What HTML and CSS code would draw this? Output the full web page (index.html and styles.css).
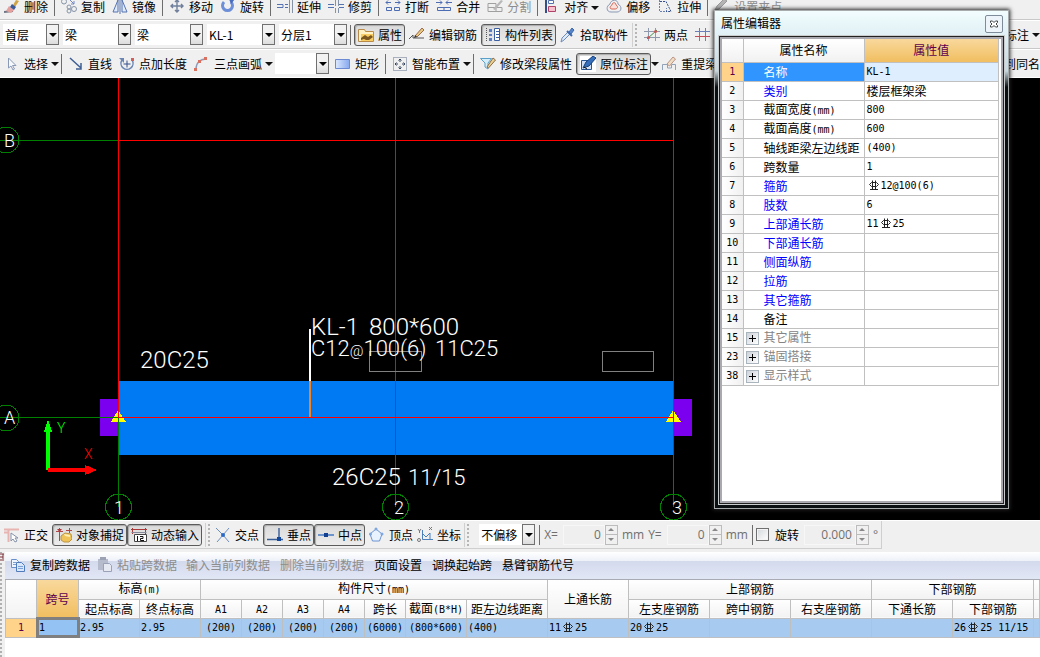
FILE: index.html
```html
<!DOCTYPE html>
<html lang="zh-CN">
<head>
<meta charset="utf-8">
<title>梁构件编辑</title>
<link rel="stylesheet" href="styles.css">
</head>
<body>
<svg class="defs" aria-hidden="true">
  <symbol id="brush" viewBox="0 0 16 16"><path d="M0 12l9-1" stroke="#6d7686" stroke-width="2"/><path d="M2 11l3-5 5 4-3 3z" fill="#e4a09c"/><path d="M9 5l3-5 3 1-4 6z" fill="#d0a545"/><path d="M6 7l4 3 2-3-4-3z" fill="#3d5a96"/></symbol>
  <symbol id="copyc" viewBox="0 0 16 16"><g fill="none" stroke="#8593a8"><circle cx="3" cy="1.500" r="2.500"/><circle cx="8" cy="7" r="2"/><circle cx="13" cy="9" r="2.500"/><circle cx="8" cy="11" r="2"/></g><path d="M9 0l4 4M13 1v3h-3" stroke="#7387c0" fill="none"/></symbol>
  <symbol id="mirror" viewBox="0 0 16 16"><path d="M6 0v12H1zM10 0v12h5z" fill="#dfeafd" stroke="#5572b0"/><path d="M8 0v14" stroke="#5572b0"/></symbol>
  <symbol id="move" viewBox="0 0 16 16"><path d="M8 0v12M2 6h12M6 2l2-2 2 2M6 10l2 2 2-2M4 4L2 6l2 2M12 4l2 2-2 2" fill="none" stroke="#6f7f9c" stroke-width="1.400"/></symbol>
  <symbol id="rotate" viewBox="0 0 16 16"><path d="M4 2a5 5 0 1 0 7 0" fill="none" stroke="#6d8ed8" stroke-width="3"/><path d="M9-1h6l-4 5z" fill="#4a6dc0"/></symbol>
  <symbol id="extend" viewBox="0 0 16 16"><path d="M0 4.500h6v3H0M8 4.500h3M8 7.500h3" fill="none" stroke="#5572b0"/><path d="M12.500 0v13M15.500 0v13" stroke="#8593a8"/></symbol>
  <symbol id="trim" viewBox="0 0 16 16"><path d="M0 4.500h6M0 7.500h6M11 4.500h5M11 7.500h5" stroke="#5572b0"/><path d="M7.500 0v13M10.500 0v13" stroke="#8593a8" stroke-dasharray="6 2"/></symbol>
  <symbol id="break" viewBox="0 0 16 16"><path d="M1 2.500h5M10 2.500h5M3 .500l-2 2 2 2M13 .500l2 2-2 2M1.500 7.500h5v3h-5zM9.500 7.500h5v3h-5z" fill="none" stroke="#4c6cb4"/></symbol>
  <symbol id="join" viewBox="0 0 16 16"><path d="M0 2.500h6M10 2.500h6M4 .500l2 2-2 2M12 .500l-2 2 2 2M1.500 7.500h13v3h-13zM8 7v4" fill="none" stroke="#4c6cb4"/></symbol>
  <symbol id="split" viewBox="0 0 16 16"><path d="M1 3.500h8v8H1zM1 7.500h14v4H5" fill="none" stroke="#a0a0a0"/><path d="M6 9l8-9 2 1-8 9z" fill="#b8b8b8"/></symbol>
  <symbol id="align" viewBox="0 0 16 16"><path d="M2 0v13" stroke="#34508c" stroke-width="2"/><path d="M4.500 .500h5v3h-5z" fill="#fff" stroke="#5572b0"/><path d="M4.500 6.500h7v5h-7z" fill="#f6c1cf" stroke="#b04468"/></symbol>
  <symbol id="offset" viewBox="0 0 16 16"><path d="M4 4c1-5 8-5 8 0 5 3 3 8-1 8H5C0 12 0 6 4 4z" fill="none" stroke="#8a99b4"/><path d="M6 5c0-3 4-3 4 0 3 2 1 4-1 4H6c-3 0-2-3 0-4z" fill="#fae0da" stroke="#d4685a"/></symbol>
  <symbol id="stretch" viewBox="0 0 16 16"><path d="M2.500 0v11.500h7V8" fill="none" stroke="#6a81b5" stroke-dasharray="2 1"/><path d="M3 1.500h6l5 10H9" fill="none" stroke="#34508c" stroke-dasharray="2 1"/></symbol>
  <symbol id="pencilg" viewBox="0 0 16 16"><path d="M1 10l2-4 7-7 3 2-8 8z" fill="#b4b4b4" stroke="#999"/></symbol>
  <symbol id="props" viewBox="0 0 16 16"><path d="M.500 2.500h6l1 2h8v10H.500z" fill="#fff3c6" stroke="#b98b4a"/><path d="M3 7h12v7H3z" fill="#f8cd63"/><path d="M3 11l4-3 3 2 3-2 2 2-4 3H8l-2-1-3 1z" fill="#7b581f"/></symbol>
  <symbol id="editbar" viewBox="0 0 16 16"><path d="M0 12l4-4v3h11" fill="none" stroke="#555"/><path d="M6 9l7-8 2 2-7 7z" fill="#e8c87b" stroke="#9c6a4f"/><path d="M5 11l1-3 2 2z" fill="#333"/></symbol>
  <symbol id="list" viewBox="0 0 16 16"><path d="M1.500 1v13" stroke="#555" stroke-dasharray="1 1"/><path d="M4 2h3v3H4zM4 7h3v2H4zM4 11h3v3H4z" fill="#5b7fc4"/><path d="M9.500 1.500h5v12h-5z" fill="#fff" stroke="#3c5fa4"/><path d="M11 4.500h3M11 7.500h3M11 10.500h3" stroke="#3c5fa4"/></symbol>
  <symbol id="picker" viewBox="0 0 16 16"><path d="M1 15l1-4 6-6 2 2-6 6z" fill="#dce9fb" stroke="#6f8cb8"/><path d="M7 4l5 5" stroke="#3f68ac" stroke-width="2"/><path d="M9 5l3-4 2 2-3 4z" fill="#5585cc" stroke="#3f68ac"/></symbol>
  <symbol id="twopt" viewBox="0 0 16 16"><path d="M4.500 1v13M11.500 1v13M0 4.500h16M0 10.500h16" stroke="#9099ab"/><path d="M3 12l10-9" stroke="#43944a"/><circle cx="4.500" cy="10.500" r="1.500" fill="#c55"/><circle cx="11.500" cy="4.500" r="1.500" fill="#c55"/></symbol>
  <symbol id="parallel" viewBox="0 0 16 16"><path d="M4.500 1v13M10.500 1v13" stroke="#6a7fb8"/><path d="M0 4.500h15" stroke="#6a7fb8"/><path d="M0 9.500h15" stroke="#c44d5c"/></symbol>
  <symbol id="cursor" viewBox="0 0 16 16"><path d="M4.500 2v10l2.500-2 2 4 1.500-1-2-3.500H12z" fill="#f6f8fc" stroke="#8a9ab6"/></symbol>
  <symbol id="line" viewBox="0 0 16 16"><path d="M2 2l11 10M13 7v6H8" fill="none" stroke="#3f5f94" stroke-width="1.500"/></symbol>
  <symbol id="ptlen" viewBox="0 0 16 16"><path d="M3 4a6 6 0 1 0 10 0" fill="none" stroke="#6c86b4" stroke-width="1.500"/><path d="M0 2h5v5z" fill="#6c86b4"/><path d="M8 4.500v7M4.500 8h7" stroke="#34508c"/><path d="M12 2h3v3h-3z" fill="#d2605a"/></symbol>
  <symbol id="arc" viewBox="0 0 16 16"><path d="M2 13C2 7 6 3 12 3" fill="none" stroke="#8f9ab8" stroke-width="1.300"/><path d="M0 12h3v3H0zM4 4h3v3H4zM10 1h3v3h-3z" fill="#d97060"/></symbol>
  <symbol id="rect" viewBox="0 0 16 16"><defs><linearGradient id="rg"><stop stop-color="#dce9ff"/><stop offset="1" stop-color="#86a8ee"/></linearGradient></defs><path d="M.500 3.500h14v9H.500z" fill="url(#rg)" stroke="#6c8bd2"/></symbol>
  <symbol id="smart" viewBox="0 0 16 16"><path d="M1.500 1.500h13v13h-13z" fill="none" stroke="#60718c" stroke-dasharray="1 1"/><path d="M8 3v3M8 10v3M3 8h3M10 8h3M6.500 4.500L8 3l1.500 1.500M6.500 11.500L8 13l1.500-1.500M4.500 6.500L3 8l1.500 1.500M11.500 6.500L13 8l-1.500 1.500" fill="none" stroke="#35455f"/></symbol>
  <symbol id="filter" viewBox="0 0 16 16"><path d="M.500 2.500h11L8 7v6l-3-2V7z" fill="#d4effa" stroke="#5aa0c8"/><path d="M7 11l6-9 2.500 2-7 8z" fill="#ecd28e" stroke="#8a6b4b"/></symbol>
  <symbol id="mark" viewBox="0 0 16 16"><path d="M0 0h16v16H0z" fill="#fff"/><path d="M1.500 4.500h10v9h-10z" fill="#cfe0f7" stroke="#2b5694"/><path d="M3 12l3-6 7-6 3 2-7 8z" fill="#356fba" stroke="#173d79"/><path d="M4 11l3 2" stroke="#111"/></symbol>
  <symbol id="relift" viewBox="0 0 16 16"><path d="M1.500 14V8.500h5V12h4V8.500h4V14" fill="none" stroke="#92a2b8"/><path d="M6 8l6-7 2.500 2-6 7z" fill="#f1ddc4" stroke="#bb9484"/></symbol>
  <symbol id="ortho" viewBox="0 0 16 16"><path d="M0 2.500h15M0 5.500h4M4.500 3v12" fill="none" stroke="#e8b4b0" stroke-width="2"/><path d="M7 6v8l2-2 2 3 2-1-2-3h3z" fill="#fff" stroke="#8592a8"/></symbol>
  <symbol id="snap" viewBox="0 0 16 16"><path d="M3.500 1v13M13.500 1v5M0 4.500h7M10 3.500h6" stroke="#ad4848"/><path d="M1 2l2.500 3L6 2z" fill="#ad3838"/><path d="M5 9l4-3 6 1 1 5-3 3H8L5 13z" fill="#efc357" stroke="#bc9444"/><path d="M8 7l6 1v2L9 9z" fill="#fff0b8"/></symbol>
  <symbol id="dyn" viewBox="0 0 16 16"><path d="M0 2.500h16M1.500 1v6M14.500 1v6" stroke="#ad3838"/><path d="M.500 5.500h15" stroke="#889"/><path d="M3.500 7.500h12v7h-12z" fill="#fff" stroke="#444"/><path d="M6.500 9v5M9 9.500h3v2H9.500v2H13" fill="none" stroke="#111"/></symbol>
  <symbol id="cross" viewBox="0 0 16 16"><path d="M1 1l7 7 6-7M2 15l6-7 6 7" fill="none" stroke="#6d8fc0"/><circle cx="8" cy="8" r="2" fill="#2b69c8"/></symbol>
  <symbol id="perp" viewBox="0 0 16 16"><path d="M12 1v11M0 12.500h16" stroke="#3a5e98" stroke-width="1.400"/><path d="M10 10h4v4h-4z" fill="#12499c"/></symbol>
  <symbol id="mid" viewBox="0 0 16 16"><path d="M0 8h16" stroke="#3a72c0" stroke-width="1.400"/><path d="M6 6h4v4H6z" fill="#123f90"/></symbol>
  <symbol id="penta" viewBox="0 0 16 16"><path d="M7 2l6 5-2.500 7h-7L1 7z" fill="#e9f2ff" stroke="#6c94cf"/><circle cx="7" cy="2" r="1.500" fill="#7ea6df"/><circle cx="13" cy="7" r="1.500" fill="#7ea6df"/><circle cx="1.500" cy="7" r="1.500" fill="#7ea6df"/></symbol>
  <symbol id="coord" viewBox="0 0 16 16"><path d="M5.500 3v9.500H16M5 6l4 4 4-4v6" fill="none" stroke="#4b80bf"/><path d="M1 2l1.500 2L4 2M2.500 4v2M12 0l3 3M15 0l-3 3" stroke="#777" fill="none"/><circle cx="2" cy="13" r="1.500" fill="none" stroke="#777"/></symbol>
  <symbol id="copy" viewBox="0 0 16 16"><path d="M1.500 2.500h5l2 2v6h-7z" fill="#eef5ff" stroke="#6a90cb"/><path d="M6.500 5.500h5l3 3v6h-8z" fill="#d8e7fc" stroke="#507bbd"/><path d="M8 9.500h5M8 11.500h5M3 5.500h3M3 7.500h3" stroke="#7da1d6"/></symbol>
  <symbol id="paste" viewBox="0 0 16 16"><path d="M1 2h10v11H1z" fill="#b6bccb"/><path d="M3 0h6v3H3z" fill="#9aa2b4"/><path d="M6.500 6.500h6l2 2v6h-8z" fill="#e6e9f2" stroke="#99a2b7"/></symbol>
  <symbol id="rebar" viewBox="0 0 12 10"><path d="M3.500 2.500h5l2 2-2 2h-5l-2-2zM4.500 .500v9M7.500 .500v9M2 9.500h8" fill="none" stroke="#222"/></symbol>
</svg>

<div class="app">
  <header class="toolbars">
    <div class="bar bar-edit">
      <button class="tool"><svg><use href="#brush"/></svg>删除</button><i class="sep"></i>
      <button class="tool"><svg><use href="#copyc"/></svg>复制</button>
      <button class="tool"><svg><use href="#mirror"/></svg>镜像</button><i class="sep"></i>
      <button class="tool"><svg><use href="#move"/></svg>移动</button>
      <button class="tool"><svg><use href="#rotate"/></svg>旋转</button><i class="sep"></i>
      <button class="tool"><svg><use href="#extend"/></svg>延伸</button>
      <button class="tool"><svg><use href="#trim"/></svg>修剪</button><i class="sep"></i>
      <button class="tool"><svg><use href="#break"/></svg>打断</button>
      <button class="tool"><svg><use href="#join"/></svg>合并</button>
      <button class="tool" disabled><svg><use href="#split"/></svg>分割</button><i class="sep"></i>
      <button class="tool drop"><svg><use href="#align"/></svg>对齐</button>
      <button class="tool"><svg><use href="#offset"/></svg>偏移</button>
      <button class="tool"><svg><use href="#stretch"/></svg>拉伸</button><i class="sep"></i>
      <button class="tool" disabled><svg><use href="#pencilg"/></svg>设置夹点</button>
    </div>
    <div class="bar bar-member">
      <span class="combo narrow"><select aria-label="楼层"><option>首层</option></select><i></i></span>
      <span class="combo"><select aria-label="构件类别"><option>梁</option></select><i></i></span>
      <span class="combo"><select aria-label="构件类型"><option>梁</option></select><i></i></span>
      <span class="combo"><select aria-label="构件名称"><option>KL-1</option></select><i></i></span>
      <span class="combo"><select aria-label="分层"><option>分层1</option></select><i></i></span>
      <i class="sep"></i>
      <button class="tool pressed"><svg><use href="#props"/></svg>属性</button>
      <button class="tool"><svg><use href="#editbar"/></svg>编辑钢筋</button>
      <button class="tool pressed"><svg><use href="#list"/></svg>构件列表</button>
      <button class="tool"><svg><use href="#picker"/></svg>拾取构件</button>
      <i class="grip"></i>
      <button class="tool"><svg><use href="#twopt"/></svg>两点</button>
      <button class="tool" aria-label="平行"><svg><use href="#parallel"/></svg></button>
      <button class="tool drop last">标注</button>
    </div>
    <div class="bar bar-draw">
      <button class="tool drop"><svg><use href="#cursor"/></svg>选择</button><i class="sep"></i>
      <button class="tool"><svg><use href="#line"/></svg>直线</button>
      <button class="tool"><svg><use href="#ptlen"/></svg>点加长度</button>
      <button class="tool drop"><svg><use href="#arc"/></svg>三点画弧</button>
      <span class="combo small"><select aria-label="画弧方式"><option></option></select><i></i></span>
      <button class="tool"><svg><use href="#rect"/></svg>矩形</button><i class="sep"></i>
      <button class="tool drop"><svg><use href="#smart"/></svg>智能布置</button><i class="sep"></i>
      <button class="tool"><svg><use href="#filter"/></svg>修改梁段属性</button>
      <span class="splitbtn"><button class="tool pressed"><svg><use href="#mark"/></svg>原位标注</button><i class="caret"></i></span>
      <button class="tool"><svg><use href="#relift"/></svg>重提梁</button>
      <button class="tool last">到同名</button>
    </div>
  </header>

  <main class="scene">
    <svg class="drawing" role="img" aria-label="梁平面图">
      <g shape-rendering="crispEdges">
        <path d="M118 303h556v74H118z" fill="#007af3"/>
        <path d="M100 321h18v37h-18zM674 321h18v37h-18z" fill="#7a00ef"/>
        <path d="M118 332l8 12h-15zM673 332l8 12h-15z" fill="#ff0"/>
        <g fill="none" stroke="#008000">
          <path d="M0 62.500h118M0 339.500h118M118.500 339v90M395.500 339v90M673.500 339v90"/>
          <circle cx="6" cy="62" r="13"/><circle cx="6" cy="340" r="13"/>
          <circle cx="118.500" cy="429" r="13"/><circle cx="395.500" cy="429" r="13"/><circle cx="673.500" cy="429" r="13"/>
        </g>
        <path d="M118 62.500h556M118.500 0v339M395.500 0v339M673.500 0v339M118 339.500h556" fill="none" stroke="#f00"/>
        <path d="M369.500 273.500h52v20h-52zM602.500 273.500h51v20h-51z" fill="none" stroke="#808080"/>
        <path d="M310 251v52" stroke="#fff" stroke-width="2"/><path d="M310 303v36" stroke="#f58220" stroke-width="2"/>
        <path d="M46 392v-38h-2l4-13 4 13h-2v38z" fill="#0f0"/>
        <path d="M48 390h37v-3l12 5-12 5v-3H48z" fill="#f00"/>
      </g>
      <g class="cad">
        <text x="140" y="290">20C25</text>
        <text x="311" y="257">KL-1</text><text x="369" y="257">800*600</text>
        <text class="stirrup" x="311" y="278">C12<tspan class="at">@</tspan>100(6)</text><text class="stirrup" x="435" y="278">11C25</text>
        <text x="332" y="407">26C25</text><text class="stirrup" x="408" y="407">11/15</text>
      </g>
      <g class="cad axis">
        <text x="4" y="69">B</text><text x="4" y="346">A</text>
        <text x="114" y="436">1</text><text x="394" y="436">2</text><text x="672" y="436">3</text>
        <text class="ax-y" x="57" y="355">Y</text><text class="ax-x" x="84" y="381">X</text>
      </g>
    </svg>
  </main>

  <div class="snapbar">
    <div class="bar bar-snap">
      <button class="tool"><svg><use href="#ortho"/></svg>正交</button>
      <span class="group"><button class="tool pressed"><svg><use href="#snap"/></svg>对象捕捉</button><button class="tool pressed"><svg><use href="#dyn"/></svg>动态输入</button></span>
      <i class="grip"></i>
      <button class="tool"><svg><use href="#cross"/></svg>交点</button>
      <span class="group"><button class="tool pressed"><svg><use href="#perp"/></svg>垂点</button><button class="tool pressed"><svg><use href="#mid"/></svg>中点</button></span>
      <button class="tool"><svg><use href="#penta"/></svg>顶点</button>
      <button class="tool"><svg><use href="#coord"/></svg>坐标</button>
      <i class="grip"></i>
      <span class="combo offset"><select aria-label="偏移方式"><option>不偏移</option></select><i></i></span>
      <i class="sep"></i>
      <span class="field"><label for="dx">X=</label><input id="dx" value="0" disabled><span class="spin"><i></i><i></i></span><span>mm</span></span>
      <span class="field"><label for="dy">Y=</label><input id="dy" value="0" disabled><span class="spin"><i></i><i></i></span><span>mm</span></span>
      <i class="sep"></i>
      <span class="field rot"><input id="rot" type="checkbox"><label for="rot">旋转</label><input class="angle" aria-label="旋转角度" value="0.000" disabled><span class="spin"><i></i><i></i></span><span>°</span></span>
    </div>
  </div>

  <section class="panel">
    <div class="gutter"><svg viewBox="0 0 5 8"><path d="M0 1h4M0 4h3M0 7h4M3 1v5" stroke="#7a3038" fill="none"/></svg></div>
    <div class="panelbody">
    <nav class="paneltools">
      <button class="tool"><svg><use href="#copy"/></svg>复制跨数据</button>
      <button class="tool" disabled><svg><use href="#paste"/></svg>粘贴跨数据</button>
      <button class="tool" disabled>输入当前列数据</button>
      <button class="tool" disabled>删除当前列数据</button>
      <button class="tool">页面设置</button>
      <button class="tool">调换起始跨</button>
      <button class="tool">悬臂钢筋代号</button>
    </nav>
    <table class="spans">
      <colgroup><col class="c-no"><col class="c-span"><col class="c-md"><col class="c-md"><col class="c-sm"><col class="c-sm"><col class="c-sm"><col class="c-sm"><col class="c-sm"><col class="c-md"><col class="c-lg"><col class="c-lg"><col class="c-lg"><col class="c-lg"><col class="c-lg"><col class="c-lg"><col class="c-lg"><col></colgroup>
      <thead>
        <tr><th rowspan="2"></th><th rowspan="2" class="hot">跨号</th><th colspan="2">标高<b>(m)</b></th><th colspan="7">构件尺寸<b>(mm)</b></th><th rowspan="2">上通长筋</th><th colspan="3">上部钢筋</th><th colspan="2">下部钢筋</th><th></th></tr>
        <tr><th>起点标高</th><th>终点标高</th><th><b>A1</b></th><th><b>A2</b></th><th><b>A3</b></th><th><b>A4</b></th><th>跨长</th><th>截面<b>(B*H)</b></th><th>距左边线距离</th><th>左支座钢筋</th><th>跨中钢筋</th><th>右支座钢筋</th><th>下通长筋</th><th>下部钢筋</th><th></th></tr>
      </thead>
      <tbody>
        <tr><th class="no">1</th><td class="active">1</td><td>2.95</td><td>2.95</td><td class="mid">(200)</td><td class="mid">(200)</td><td class="mid">(200)</td><td class="mid">(200)</td><td class="mid">(6000)</td><td class="mid">(800*600)</td><td>(400)</td><td>11<svg class="rb"><use href="#rebar"/></svg>25</td><td>20<svg class="rb"><use href="#rebar"/></svg>25</td><td></td><td></td><td></td><td>26<svg class="rb"><use href="#rebar"/></svg>25 11/15</td><td></td></tr>
      </tbody>
    </table>
    </div>
  </section>

  <aside class="dialog" role="dialog" aria-label="属性编辑器">
    <div class="titlebar"><h1>属性编辑器</h1><button class="close" aria-label="关闭"><svg viewBox="0 0 10 10"><path d="M1.500 2h2L5 3.500 6.500 2h2v1.500L7 5l1.500 1.500V8h-2L5 6.500 3.500 8h-2V6.500L3 5 1.500 3.500z" fill="#fff" stroke="#444"/></svg></button></div>
    <div class="client">
      <table class="props">
        <colgroup><col class="p-no"><col class="p-name"><col></colgroup>
        <thead><tr><th></th><th>属性名称</th><th class="hot">属性值</th></tr></thead>
        <tbody>
          <tr class="sel"><th>1</th><td>名称</td><td>KL-1</td></tr>
          <tr><th>2</th><td class="key">类别</td><td class="zh">楼层框架梁</td></tr>
          <tr><th>3</th><td>截面宽度<b>(mm)</b></td><td>800</td></tr>
          <tr><th>4</th><td>截面高度<b>(mm)</b></td><td>600</td></tr>
          <tr><th>5</th><td>轴线距梁左边线距</td><td>(400)</td></tr>
          <tr><th>6</th><td>跨数量</td><td>1</td></tr>
          <tr><th>7</th><td class="key">箍筋</td><td><svg class="rb"><use href="#rebar"/></svg>12@100(6)</td></tr>
          <tr><th>8</th><td class="key">肢数</td><td>6</td></tr>
          <tr><th>9</th><td class="key">上部通长筋</td><td>11<svg class="rb"><use href="#rebar"/></svg>25</td></tr>
          <tr><th>10</th><td class="key">下部通长筋</td><td></td></tr>
          <tr><th>11</th><td class="key">侧面纵筋</td><td></td></tr>
          <tr><th>12</th><td class="key">拉筋</td><td></td></tr>
          <tr><th>13</th><td class="key">其它箍筋</td><td></td></tr>
          <tr><th>14</th><td>备注</td><td></td></tr>
          <tr><th>15</th><td class="more"><button aria-label="展开其它属性"></button>其它属性</td><td></td></tr>
          <tr><th>23</th><td class="more"><button aria-label="展开锚固搭接"></button>锚固搭接</td><td></td></tr>
          <tr><th>38</th><td class="more"><button aria-label="展开显示样式"></button>显示样式</td><td></td></tr>
        </tbody>
      </table>
    </div>
  </aside>
</div>
</body>
</html>
```
FILE: styles.css
```css
* { box-sizing: border-box; }
body {
  margin: 0;
  font: 12px/14px "Noto Sans CJK SC", sans-serif;
  color: #000;
  background: #f0f0f0;
}
.defs { position: absolute; width: 0; height: 0; }
.app {
  position: relative;
  display: flex;
  flex-direction: column;
  height: 100vh;
  overflow: hidden;
}
button, select, input { font: inherit; color: inherit; margin: 0; }

/* toolbars */
.bar { display: flex; align-items: center; white-space: nowrap; overflow: hidden; }
.toolbars .bar { border-bottom: 1px solid #c8c8c8; }
.toolbars .bar + .bar { border-top: 1px solid #fff; }
.toolbars .bar:last-child { border-bottom-color: #fff; }
.tool {
  display: flex;
  flex: none;
  align-items: center;
  gap: 4px;
  padding: 0;
  border: 0;
  background: none;
  line-height: 14px;
}
.tool svg { width: 16px; height: 16px; flex: none; }
.tool:disabled { color: #8d8d8d; }
.tool.drop::after, .caret {
  content: "";
  border: 4px solid transparent;
  border-top-color: #111;
  border-bottom-width: 0;
}
.tool.drop::after { margin-left: -1px; }
.tool.pressed {
  height: 22px;
  padding: 0 2px 0 3px;
  border: 1px solid #5b5b5b;
  border-radius: 3px;
  background: linear-gradient(#dadada, #ececec);
  box-shadow: inset 1px 1px 1px #aaa;
}
.last { margin-left: auto; }
.sep { flex: none; width: 1px; height: 20px; background: #6d6d6d; }
.grip {
  flex: none;
  width: 6px;
  height: 24px;
  border-left: 1px solid #d0d0d0;
  background: radial-gradient(circle at 3px 2px, #b5b5b5 1px, transparent 1px) 0 0 / 6px 4px;
}
.bar-edit { height: 20px; padding-left: 4px; gap: 7px; align-items: flex-start; }
.bar-edit .sep { margin: 0 -1px; height: 16px; }
.bar-edit .tool { align-items: flex-start; }
.bar-edit .drop::after { align-self: center; }
.bar-member { height: 29px; padding-left: 3px; gap: 4px; }
.bar-member .sep { margin: 0 -1px; }
.bar-member .grip { margin: 0 2px 0 0; }
.bar-member [aria-label="平行"] { margin-left: 3px; }
.bar-draw { height: 29px; padding-left: 4px; gap: 7px; }
.bar-draw .sep { margin: 0 -1px; }
.bar-draw .drop + .sep { margin-left: -5px; }
.bar-draw .combo { margin-left: -5px; margin-right: -1px; }
.bar-draw .splitbtn { margin-left: -3px; margin-right: -5px; }

.combo { display: flex; flex: none; width: 68px; height: 21px; background: #fff; }
.combo.narrow { width: 56px; }
.combo.small { width: 54px; }
.combo.offset { width: 56px; }
.combo select {
  flex: 1;
  min-width: 0;
  padding: 0 0 0 2px;
  border: 0;
  appearance: none;
  background: none;
}
.combo i {
  display: grid;
  place-items: center;
  width: 13px;
  border: 1px solid #707070;
  background: linear-gradient(#f2f2f2 50%, #dcdcdc);
}
.combo i::after { content: ""; border: 4px solid transparent; border-top-color: #000; border-bottom-width: 0; }
.splitbtn, .group { display: flex; flex: none; align-items: center; }

/* drawing area */
.scene { flex: 1; min-height: 0; background: #000; }
.drawing { display: block; width: 100%; height: 100%; }
.cad { font: 300 24px Roboto, sans-serif; fill: #fff; }
.cad .stirrup { font-size: 22px; }
.cad .at { font-size: 15px; }
.axis { font-size: 18px; }
.ax-y { font-size: 14px; fill: #0f0; }
.ax-x { font-size: 14px; fill: #f00; }

/* snap bar */
.snapbar { display: flex; flex: none; height: 32px; border-top: 1px solid #fff; }
.bar-snap { height: 28px; padding: 0 3px 0 4px; gap: 4px; border: solid #cfcfcf; border-width: 0 1px 1px 0; }
.bar-snap .grip { margin-left: -1px; }
.bar-snap .combo { margin-left: 5px; }
.field { display: flex; align-items: center; color: #6f6f6f; font-family: "Open Sans", sans-serif; }
.field input:not([type]) {
  width: 42px;
  height: 20px;
  margin-left: 5px;
  padding: 0 3px;
  border: 1px solid #f7f7f7;
  text-align: right;
  background: #efefef;
}
.field input.angle { width: 52px; }
.spin { display: flex; flex-direction: column; width: 13px; height: 20px; margin-right: 4px; border: 1px solid #bcbcbc; }
.spin i { display: grid; place-items: center; flex: 1; }
.spin i + i { border-top: 1px solid #bcbcbc; }
.spin i::after { content: ""; border: 3px solid transparent; border-top: 0; border-bottom-color: #888; }
.spin i + i::after { border-top: 3px solid #888; border-bottom: 0; }
.rot { margin-left: -1px; }
.rot label { color: #000; font-family: "Noto Sans CJK SC", sans-serif; }
.rot [type="checkbox"] {
  width: 13px;
  height: 13px;
  margin-right: 6px;
  appearance: none;
  border: 1px solid #707070;
  background: linear-gradient(135deg, #d4d8dc, #fff);
  box-shadow: inset 0 0 0 1px #f4f4f4;
}

/* span data panel */
.panel { display: flex; flex: none; height: 105px; background: #fff; }
.gutter {
  flex: none;
  width: 5px;
  background: radial-gradient(circle at 1px 2px, #b0b0b0 1px, transparent 1px) 0 10px / 5px 4px repeat-y #f0f0f0;
}
.gutter svg { display: block; width: 5px; height: 8px; margin-top: 1px; background: #f0f0f0; }
.panelbody { flex: 1; min-width: 0; }
.paneltools {
  display: flex;
  align-items: center;
  gap: 10px;
  height: 28px;
  padding: 0 0 1px 5px;
  border-bottom: 1px solid #a9abb4;
  background: linear-gradient(#fff 0, #eef1f9 9px, #d3daed 9px, #e2e7f6);
}
.paneltools .tool:nth-child(2) { margin-left: -3px; }
.paneltools .tool:nth-child(3) { margin-left: -1px; }
table { table-layout: fixed; border-collapse: collapse; }
th, td { padding: 0; font-weight: 400; white-space: nowrap; overflow: hidden; }
b { font-family: "DejaVu Sans Mono", monospace; font-size: 10px; font-weight: 400; }
td, .no, .props tbody th { font-family: "DejaVu Sans Mono", monospace; font-size: 10px; }
.rb { width: 12px; height: 10px; margin: 0 1px; vertical-align: -1px; }
.hot { color: #5b004f; background: linear-gradient(#f8d89c, #f1be60); }

.spans { width: 100%; border-left: 1px solid #b8b8b8; }
.spans th { height: 19px; border: 1px solid #bfbfbf; border-top: 0; background: #fafafa; }
.spans thead th:not(.hot) { background: linear-gradient(#fff, #f2f2f2); }
.spans .hot { background: linear-gradient(#f8d89c, #f1be60); }
.spans tbody .no { color: #5b004f; background: #ffd48a; }
.spans td { height: 19px; padding-left: 1px; border: 1px solid #bfbfbf; background: #a6caf0; }
.spans td.mid { padding: 0; text-align: center; }
.spans td.active { border: 0; outline: 3px solid #7f7f7f; outline-offset: -2px; background: #94c2f3; padding-left: 2px; }
.c-no { width: 31px; }
.c-span { width: 42px; }
.c-sm { width: 41px; }
.c-md { width: 61px; }
.c-lg { width: 81px; }

/* property editor window */
.dialog {
  position: absolute;
  top: 10px;
  right: 31px;
  display: flex;
  flex-direction: column;
  width: 295px;
  height: 499px;
  padding: 0 4px 4px;
  border: 1px solid #a8acac;
  background: linear-gradient(#f2fdfe 0, #e0f0f5 24px, #c5d8df 60px, #0b0f12 76px);
  box-shadow: 0 0 4px 1px #222;
}
.titlebar { display: flex; justify-content: space-between; height: 25px; padding: 0 1px 0 2px; }
.titlebar h1 { margin: 5px 0 0; font-size: 12px; line-height: 14px; font-weight: 400; }
.close {
  display: grid;
  place-items: center;
  width: 18px;
  height: 18px;
  margin-top: 4px;
  padding: 0;
  border: 1px solid #7d8c98;
  border-radius: 2px;
  background: #edf5fa;
}
.close svg { width: 10px; height: 10px; }
.client {
  flex: 1;
  min-height: 0;
  border: 2px solid #a9a9af;
  outline: 1px solid #222;
  padding: 0 2px 0 0;
  background: #fff;
  margin: 1px;
  box-shadow: 0 0 0 2px #c9cdcd;
}
.props { width: 100%; }
.p-no { width: 21px; }
.p-name { width: 121px; }
.props thead th { height: 23px; border: 1px solid #c0c0c0; border-top: 0; border-left: 0; background: linear-gradient(#fff, #f1f1f1); }
.props thead th.hot { color: #5b004f; background: linear-gradient(#f8d89c, #f1be60); }
.props tbody th { height: 19px; border: 1px solid #c0c0c0; border-left: 0; background: linear-gradient(90deg, #fff, #f0f0f0); }
.props td { height: 19px; padding-left: 2px; border: 1px solid #c0c0c0; }
.props td:nth-child(2) { padding-left: 20px; font: 12px/14px "Noto Sans CJK SC", sans-serif; }
.props td.zh { font: 12px/14px "Noto Sans CJK SC", sans-serif; }
.props .key { color: #00f; }
.props .sel th { color: #5b004f; background: #ffd48a; }
.props .sel td { background: #dfeeff; }
.props .sel td:nth-child(2) { color: #fff; background: #3195ff; }
.props td.more { color: #848484; }
.props td.more:nth-child(2) { padding-left: 2px; }
.more button {
  width: 13px;
  height: 13px;
  margin-right: 5px;
  padding: 0;
  border: 1px solid #a9b4bd;
  vertical-align: -2px;
  background:
    linear-gradient(#000, #000) center / 7px 1px no-repeat,
    linear-gradient(#000, #000) center / 1px 7px no-repeat,
    linear-gradient(135deg, #cdd3da, #fff);
}
```
